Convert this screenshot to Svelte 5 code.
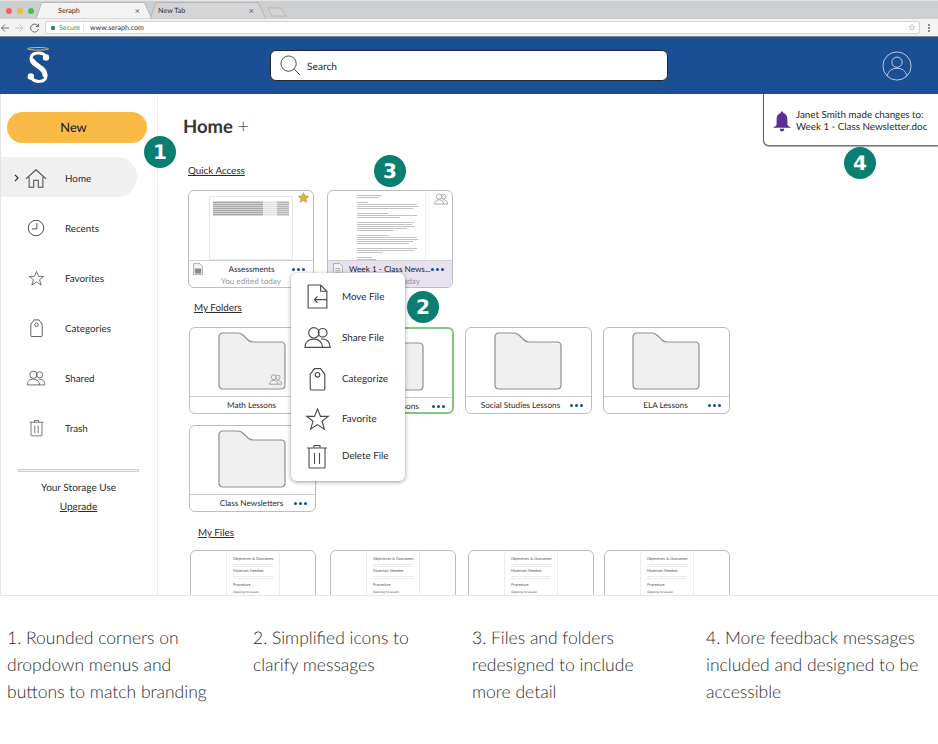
<script>
  const navItems = [
    { label: 'Home', icon: 'home', active: true },
    { label: 'Recents', icon: 'clock' },
    { label: 'Favorites', icon: 'star' },
    { label: 'Categories', icon: 'tag' },
    { label: 'Shared', icon: 'people' },
    { label: 'Trash', icon: 'trash' }
  ];

  const menuItems = [
    { label: 'Move File', icon: 'move' },
    { label: 'Share File', icon: 'people' },
    { label: 'Categorize', icon: 'tag' },
    { label: 'Favorite', icon: 'star' },
    { label: 'Delete File', icon: 'trash' }
  ];

  const folderRows = [
    [
      { name: 'Math Lessons', shared: true },
      { name: 'Science Lessons', selected: true },
      { name: 'Social Studies Lessons', long: true },
      { name: 'ELA Lessons' }
    ],
    [{ name: 'Class Newsletters' }]
  ];

  const captions = [
    '1. Rounded corners on dropdown menus and buttons to match branding',
    '2. Simplified icons to clarify messages',
    '3. Files and folders redesigned to include more detail',
    '4. More feedback messages included and designed to be accessible'
  ];

  const badges = [
    { n: 1, cls: 'b1' },
    { n: 2, cls: 'b2' },
    { n: 3, cls: 'b3' },
    { n: 4, cls: 'b4' }
  ];

  // line widths (%) for the tiny letter preview, 0 means a blank gap
  const letterLines = [40, 36, 0, 18, 96, 98, 90, 0, 50, 96, 70, 0, 92, 88, 94, 80, 60, 0, 52, 96, 98, 90, 84, 0, 96, 92, 40, 0, 24, 30, 20];
</script>

{#snippet icon(name)}
  {#if name === 'home'}
    <svg viewBox="0 0 24 22" class="ic"><path d="M1 11.500 12 1.500l11 10M4.500 9v11.500h5V13h5v7.500h5V9" /></svg>
  {:else if name === 'clock'}
    <svg viewBox="0 0 20 20" class="ic"><circle cx="10" cy="10" r="8.600" /><path d="M11 4.500V11H5.500" /></svg>
  {:else if name === 'star'}
    <svg viewBox="0 0 24 24" class="ic"><path d="M12 2l2.900 7h7.400l-6 4.700 2.300 7.600L12 16.900l-6.600 4.400 2.300-7.600-6-4.700h7.400z" /></svg>
  {:else if name === 'tag'}
    <svg viewBox="0 0 16 23" class="ic"><path d="M1 7 5 1.500h6L15 7v14a1 1 0 0 1-1 1H2a1 1 0 0 1-1-1z" /><circle cx="8" cy="7.500" r="2.200" /></svg>
  {:else if name === 'people'}
    <svg viewBox="0 0 26 22" class="ic"><circle cx="9.500" cy="6.500" r="5" /><circle cx="18" cy="6.500" r="4.200" /><path d="M1 20.500c0-5 3.500-8 8.500-8s8 3 8.500 8zM16.500 12.600c5-1 8.500 2.500 8.700 7.900h-7.200" /></svg>
  {:else if name === 'trash'}
    <svg viewBox="0 0 22 25" class="ic"><path d="M1 4h20M8 4V1.500h6V4M3 4v19a1 1 0 0 0 1 1h14a1 1 0 0 0 1-1V4M8.500 9v11M13.500 9v11" /></svg>
  {:else if name === 'move'}
    <svg viewBox="0 0 20 24" class="ic"><path d="M1 1h12l6 6v16H1zM13 1v6h6M19 15H7M10 12l-3 3 3 3" /></svg>
  {/if}
{/snippet}

{#snippet dots()}
  <span class="dots"><i></i><i></i><i></i></span>
{/snippet}

{#snippet folderCard(folder)}
  <div class="card folder-card" class:selected={folder.selected}>
    <div class="folder-thumb">
      <div class="folder-shape">
        <svg viewBox="0 0 68 58" preserveAspectRatio="none">
          <path d="M5 1h15c3 0 4 1 6 3l4 4c1.500 1.500 3 2 5 2h28c2.500 0 4 1.500 4 4v39c0 2.500-1.500 4-4 4H5c-2.500 0-4-1.500-4-4V5c0-2.500 1.500-4 4-4z" />
        </svg>
        {#if folder.shared}
          <span class="folder-share">{@render icon('people')}</span>
        {/if}
      </div>
    </div>
    <div class="card-foot folder-foot" class:long={folder.long}>
      <span class="card-name">{folder.name}</span>
      {@render dots()}
    </div>
  </div>
{/snippet}

<div class="page">
  <div class="tabstrip">
    <div class="lights"><i class="red"></i><i class="amber"></i><i class="green"></i></div>
    <div class="tab active">
      <svg viewBox="0 0 120 19" preserveAspectRatio="none"><path d="M0 19 6 .5h106l8 18.500z" /></svg>
      <span>Seraph</span><b>×</b>
    </div>
    <div class="tab">
      <svg viewBox="0 0 120 19" preserveAspectRatio="none"><path d="M0 19 6 .5h106l8 18.500z" /></svg>
      <span>New Tab</span><b>×</b>
    </div>
    <svg class="newtab" viewBox="0 0 20 10"><path d="M1 1h13l5 8H5z" /></svg>
  </div>

  <div class="toolbar">
    <svg class="nav-arrows" viewBox="0 0 40 10">
      <path class="on" d="M9 5H1.500M5 1.500 1.500 5 5 8.500" />
      <path class="off" d="M15.500 5H23M19.500 1.500 23 5l-3.500 3.500" />
      <path class="on" d="M38 3a4 4 0 1 0 .5 3M38.500 .8V3.500h-2.700" />
    </svg>
    <div class="urlbar">
      <span class="secure"><i></i>Secure</span>
      <span class="url">www.seraph.com</span>
      <span class="url-star">☆</span>
    </div>
    <span class="kebab"><i></i><i></i><i></i></span>
  </div>

  <header class="topbar">
    <svg class="logo" viewBox="0 0 24 37" role="img" aria-label="Seraph">
      <ellipse class="halo" cx="12" cy="1.800" rx="10.500" ry="1.300" />
      <path class="swash" d="M20 10C18 5 6 4 5 11c-1 7 15 10 15 18 0 7-12 7-15 1" />
      <path class="swash thick" d="M6.500 14c3 5 12.500 7 12.500 14" />
      <circle cx="20" cy="10.500" r="3.200" />
      <circle cx="4.800" cy="29.500" r="3.200" />
    </svg>
    <div class="search">
      <svg viewBox="0 0 22 22"><circle cx="9" cy="9" r="8" /><path d="m14.800 14.800 6.200 6.200" /></svg>
      <span>Search</span>
    </div>
    <svg class="avatar" viewBox="0 0 32 32">
      <circle cx="16" cy="16" r="15" />
      <circle cx="16" cy="12" r="5.500" />
      <path d="M5.500 26.500c1.500-5.500 5-8 10.500-8s9 2.500 10.500 8" />
    </svg>
  </header>

  <main class="main">
    <aside class="sidebar">
      <button class="new-btn">New</button>
      <nav class="nav">
        {#each navItems as item}
          <div class="nav-item" class:active={item.active}>
            {#if item.active}
              <svg class="chevron" viewBox="0 0 5 8"><path d="M1 .8 4 4 1 7.200" /></svg>
            {/if}
            <span class="nav-icon {item.icon}">{@render icon(item.icon)}</span>
            <span>{item.label}</span>
          </div>
        {/each}
      </nav>
      <div class="storage">
        <div class="storage-bar"></div>
        <div>Your Storage Use</div>
        <a href="#upgrade">Upgrade</a>
      </div>
    </aside>

    <section class="content">
      <h1>Home <span>+</span></h1>

      <h2 class="quick-title">Quick Access</h2>
      <div class="row quick-row">
        <div class="card file-card">
          <div class="file-thumb">
            <div class="sheet"><div class="sheet-grid"></div></div>
            <svg class="fav" viewBox="0 0 24 24"><path d="M12 1.500l3.200 7.300 7.800.7-5.900 5.200 1.800 7.800-6.900-4.100-6.900 4.100 1.800-7.800L1 9.500l7.800-.7z" /></svg>
          </div>
          <div class="card-foot file-foot">
            <span class="doc-icon">
              <svg viewBox="0 0 11 13"><path d="M.5.500h7l3 3v9H.5z" /><path class="fill" d="M2 6h7v5.500H2z" /></svg>
            </span>
            <span class="card-name">Assessments</span>
            {@render dots()}
            <span class="edited">You edited today</span>
          </div>
        </div>

        <div class="card file-card">
          <div class="file-thumb">
            <div class="letter">
              {#each letterLines as w}
                <i style="width: {w}%" class:gap={w === 0}></i>
              {/each}
            </div>
            <span class="thumb-share">{@render icon('people')}</span>
          </div>
          <div class="card-foot file-foot recent">
            <span class="doc-icon">
              <svg viewBox="0 0 11 13"><path d="M.5.500h7l3 3v9H.5zM2.500 6h6M2.500 8h6M2.500 10h6" /></svg>
            </span>
            <span class="card-name strong">Week 1 - Class News...</span>
            {@render dots()}
            <span class="edited">You edited today</span>
          </div>
        </div>
      </div>

      <h2 class="folder-title">My Folders</h2>
      {#each folderRows as row}
        <div class="row folder-row">
          {#each row as folder}
            {@render folderCard(folder)}
          {/each}
        </div>
      {/each}

      <h2 class="files-title">My Files</h2>
      <div class="row files-row">
        {#each [1, 2, 3, 4] as _}
          <div class="card lesson-card">
            <div class="lesson-page">
              <b>Objectives &amp; Outcomes</b>
              <i></i><i></i>
              <b>Materials Needed</b>
              <i></i><i></i>
              <b class="wide">Procedure</b>
              <em>Opening to Lesson</em>
              <i></i><i></i>
            </div>
          </div>
        {/each}
      </div>
    </section>

    <div class="menu">
      {#each menuItems as item}
        <div class="menu-item">
          <span class="menu-icon {item.icon}">{@render icon(item.icon)}</span>
          <span>{item.label}</span>
        </div>
      {/each}
    </div>

    <div class="toast">
      <svg viewBox="0 0 20 22"><path d="M10 0c1 0 1.500.7 1.500 1.700C15 2.500 16 5.500 16 9v5c0 1.500 2 2.500 3.500 3.500v.5H.5v-.5C2 16.500 4 15.500 4 14V9c0-3.500 1-6.500 4.500-7.300C8.500.7 9 0 10 0zM7.500 19h5c0 2-1 3-2.500 3s-2.500-1-2.500-3z" /></svg>
      <p>Janet Smith made changes to:<br />Week 1 - Class Newsletter.doc</p>
    </div>
  </main>

  <footer class="captions">
    {#each captions as caption}
      <p>{caption}</p>
    {/each}
  </footer>

  {#each badges as badge}
    <span class="badge {badge.cls}">{badge.n}</span>
  {/each}
</div>

<style>
  :global(body) {
    margin: 0;
    background: #fff;
  }

  .page {
    position: relative;
    width: 938px;
    height: 744px;
    overflow: hidden;
    font-family: Lato, "Liberation Sans", sans-serif;
    color: #2b2b2b;
    text-rendering: geometricPrecision;
  }

  /* browser chrome */
  .tabstrip {
    display: flex;
    align-items: flex-end;
    height: 19px;
    padding-top: 1px;
    background: #cecfd0;
    border-top: 1px solid #e3e3e3;
    box-sizing: border-box;
  }

  .lights {
    display: flex;
    gap: 5px;
    width: 36px;
    padding: 0 0 5px 6px;
    box-sizing: border-box;
  }

  .lights i {
    width: 6px;
    height: 6px;
    border-radius: 50%;
  }

  .red { background: #f4605a; }
  .amber { background: #f6b73c; }
  .green { background: #3ec24d; }

  .tab {
    position: relative;
    display: flex;
    align-items: center;
    justify-content: space-between;
    width: 116px;
    height: 17px;
    margin-right: -2px;
    padding: 0 12px 0 22px;
    box-sizing: border-box;
    font-size: 7.200px;
    color: #333;
  }

  .tab svg {
    position: absolute;
    inset: 0;
    width: 100%;
    height: 100%;
  }

  .tab path {
    fill: #d4d5d6;
    stroke: #aeaeae;
    stroke-width: 0.8;
    vector-effect: non-scaling-stroke;
  }

  .tab.active path {
    fill: #f3f3f3;
  }

  .tab span,
  .tab b {
    position: relative;
  }

  .tab b {
    font-size: 9px;
    font-weight: 400;
    color: #666;
  }

  .tab + .tab {
    width: 116px;
    padding-left: 8px;
  }

  .newtab {
    width: 20px;
    height: 10px;
    margin: 0 0 2px 3px;
  }

  .newtab path {
    fill: #d4d5d6;
    stroke: #a4a4a4;
    stroke-width: 0.6;
  }

  .toolbar {
    display: flex;
    align-items: center;
    height: 18px;
    background: #f3f3f3;
    border-bottom: 1px solid #7c8794;
    box-sizing: border-box;
  }

  .nav-arrows {
    width: 40px;
    height: 10px;
    margin: 0 5px 0 0;
    fill: none;
    stroke-width: 1;
  }

  .nav-arrows .on { stroke: #6d6d6d; }
  .nav-arrows .off { stroke: #c6c6c6; }

  .urlbar {
    display: flex;
    align-items: center;
    width: 875px;
    height: 13px;
    background: #fff;
    border: 1px solid #d2d2d2;
    border-radius: 2px;
    box-sizing: border-box;
    font-size: 7.100px;
  }

  .secure {
    display: flex;
    align-items: center;
    gap: 4px;
    width: 38px;
    padding-left: 5px;
    color: #3a9a5c;
    border-right: 1px solid #e6e6e6;
    box-sizing: border-box;
  }

  .secure i {
    width: 4px;
    height: 4px;
    background: #2f8f4e;
    border-radius: 1px;
  }

  .url {
    margin-left: 6px;
    color: #333;
  }

  .url-star {
    margin-left: auto;
    padding-right: 3px;
    font-family: "DejaVu Sans", sans-serif;
    font-size: 9px;
    color: #666;
  }

  .kebab {
    display: flex;
    flex-direction: column;
    gap: 1px;
    margin-left: 8px;
  }

  .kebab i {
    width: 2px;
    height: 2px;
    background: #666;
    border-radius: 50%;
  }

  /* app header */
  .topbar {
    display: flex;
    align-items: center;
    height: 57px;
    padding: 0 26px 0 26px;
    background: #1c4e94;
    box-sizing: border-box;
  }

  .logo {
    flex: none;
    width: 24px;
    height: 37px;
    fill: #fff;
  }

  .logo .halo {
    fill: none;
    stroke: #e8b23f;
    stroke-width: 1;
  }

  .logo .swash {
    fill: none;
    stroke: #fff;
    stroke-width: 3;
    stroke-linecap: round;
  }

  .logo .swash.thick {
    stroke-width: 5;
  }

  .search {
    display: flex;
    align-items: center;
    gap: 6px;
    width: 398px;
    height: 31px;
    margin: 0 auto 0 220px;
    padding-left: 9px;
    background: #fff;
    border: 1.500px solid #1f2a3a;
    border-radius: 6px;
    box-sizing: border-box;
    font-size: 10.200px;
  }

  .search span {
    position: relative;
    top: 1px;
  }

  .search svg {
    width: 21px;
    height: 21px;
    fill: none;
    stroke: #444;
    stroke-width: 1;
  }

  .avatar {
    width: 30px;
    height: 30px;
    fill: none;
    stroke: #c3d0e2;
    stroke-width: 1;
  }

  /* main area */
  .main {
    position: relative;
    display: flex;
    height: 502px;
    overflow: hidden;
    border-left: 1px solid #e6e6e6;
    border-bottom: 1px solid #e6e6e6;
    box-sizing: border-box;
  }

  .sidebar {
    flex: none;
    width: 157px;
    border-right: 1px solid #eeeeee;
    box-sizing: border-box;
    font-size: 9.800px;
  }

  .new-btn {
    display: block;
    width: 140px;
    height: 31px;
    margin: 18px 0 0 6px;
    padding: 0 7px 1px 0;
    background: #f9bb45;
    border: 0;
    border-radius: 16px;
    font-family: inherit;
    font-size: 12.800px;
    font-weight: 500;
    color: #222;
    text-rendering: geometricPrecision;
  }

  .nav {
    margin-top: 14px;
  }

  .nav-item {
    position: relative;
    display: flex;
    align-items: center;
    width: 136px;
    height: 40px;
    margin-bottom: 10px;
    padding: 4px 0 0 64px;
    box-sizing: border-box;
    border-radius: 0 20px 20px 0;
  }

  .nav-item.active {
    background: #f0f0f0;
  }

  .chevron {
    position: absolute;
    left: 13px;
    top: 17px;
    width: 5px;
    height: 8px;
    fill: none;
    stroke: #333;
    stroke-width: 1.200;
  }

  .nav-icon {
    position: absolute;
    display: flex;
    align-items: center;
    justify-content: center;
    left: 24px;
    top: 0;
    width: 22px;
    height: 42px;
  }

  .ic {
    display: block;
    width: 100%;
    height: 100%;
    fill: none;
    stroke: #4c4c4c;
    stroke-width: 1.100;
  }

  .nav-icon.home :global(svg) { width: 23px; height: 21px; }
  .nav-icon.clock :global(svg) { width: 18px; height: 18px; }
  .nav-icon.star :global(svg) { width: 17px; height: 17px; }
  .nav-icon.tag :global(svg) { width: 13px; height: 20px; }
  .nav-icon.people :global(svg) { width: 20px; height: 16px; }
  .nav-icon.trash :global(svg) { width: 15px; height: 18px; }

  .storage {
    margin: 22px 0 0 17px;
    width: 121px;
    text-align: center;
    font-size: 10px;
    line-height: 19px;
  }

  .storage-bar {
    height: 3px;
    margin-bottom: 7px;
    background: #f1f1f1;
    border: 1px solid #cfcfcf;
    box-sizing: border-box;
  }

  .storage a {
    color: #2b2b2b;
  }

  /* content */
  .content {
    flex: 1;
    padding: 20px 0 0 25px;
  }

  h1 {
    margin: 0 0 25px;
    font-size: 18.500px;
    font-weight: 700;
    line-height: 24px;
    color: #333;
  }

  h1 span {
    font-size: 20px;
    font-weight: 300;
    color: #555;
  }

  h2 {
    margin: 0 0 11px;
    font-size: 9.800px;
    font-weight: 400;
    line-height: 16px;
    text-decoration: underline;
  }

  .quick-title { margin-left: 5px; }
  .folder-title { margin: 12px 0 11px 11px; }
  .files-title { margin: 13px 0 9px 15px; }

  .row {
    display: flex;
  }

  .quick-row {
    gap: 13px;
    margin-left: 5px;
  }

  .folder-row {
    gap: 11px;
    margin: 0 0 11px 6px;
  }

  .files-row {
    gap: 12px;
    margin-left: 7px;
  }

  .files-row .card:nth-child(2),
  .files-row .card:nth-child(3) {
    position: relative;
    left: 2px;
  }

  .card {
    flex: none;
    background: #fff;
    border: 1px solid #bdbdbd;
    border-radius: 6px;
    box-sizing: border-box;
    overflow: hidden;
  }

  .card-foot {
    position: relative;
    display: flex;
    align-items: center;
    border-top: 1px solid #cfcfcf;
    box-sizing: border-box;
    font-size: 8.200px;
  }

  .card-name {
    flex: 1;
    min-width: 0;
    text-align: center;
    white-space: nowrap;
  }

  .dots {
    display: flex;
    flex: none;
    gap: 2px;
  }

  .dots i {
    width: 3px;
    height: 3px;
    background: #1c4e94;
    border-radius: 50%;
  }

  /* quick access */
  .file-card {
    width: 126px;
    height: 98px;
  }

  .file-thumb {
    position: relative;
    height: 69px;
  }

  .sheet {
    position: absolute;
    top: 5px;
    left: 20px;
    width: 84px;
    height: 64px;
    border: 1px solid #e6e6e6;
    box-sizing: border-box;
    padding: 4px 3px;
  }

  .sheet-grid {
    height: 15px;
    background:
      repeating-linear-gradient(0deg, rgba(255, 255, 255, 0.5) 0 1px, transparent 1px 2px),
      linear-gradient(90deg, #a8a8a8 0 66%, #e2e2e2 66% 84%, #b4b4b4 84% 100%);
  }

  .fav {
    position: absolute;
    top: 1px;
    right: 4px;
    width: 11px;
    height: 11px;
  }

  .fav path {
    fill: #f2b134;
    stroke: #8a6a20;
    stroke-width: 1;
  }

  .letter {
    position: absolute;
    top: 0;
    left: 27px;
    width: 71px;
    height: 69px;
    padding: 4px 6px 0 2px;
    border-right: 1px solid #efefef;
    box-sizing: border-box;
  }

  .letter i {
    display: block;
    height: 1px;
    margin-bottom: 1px;
    background: #c2c2c2;
  }

  .letter i.gap {
    height: 2px;
    background: none;
  }

  .thumb-share {
    position: absolute;
    top: 2px;
    right: 4px;
    width: 14px;
    height: 12px;
  }

  .thumb-share :global(path),
  .thumb-share :global(circle),
  .folder-share :global(path),
  .folder-share :global(circle) {
    stroke: #777;
  }

  .file-foot {
    height: 27px;
    padding: 0 8px 10px 4px;
  }

  .file-foot.recent {
    background: #e7e1f0;
    padding-left: 5px;
  }

  .file-foot .card-name {
    padding-left: 8px;
  }

  .file-foot .card-name.strong {
    padding-left: 6px;
    text-align: left;
    color: #222;
  }

  .doc-icon {
    flex: none;
    width: 10px;
    height: 12px;
  }

  .doc-icon svg {
    display: block;
    width: 100%;
    height: 100%;
    fill: #f2f2f2;
    stroke: #8a8a8a;
    stroke-width: 0.7;
  }

  .doc-icon .fill {
    fill: #8a8a8a;
    stroke: none;
  }

  .edited {
    position: absolute;
    left: 0;
    right: 0;
    bottom: 1px;
    text-align: center;
    font-size: 8.100px;
    color: #9b9b9b;
  }

  /* folders */
  .folder-card {
    width: 127px;
    height: 87px;
  }

  .folder-card.selected {
    border: 2px solid #7cc97f;
  }

  .folder-thumb {
    display: flex;
    justify-content: center;
    height: 68px;
    padding: 4px 2px 0 0;
    box-sizing: border-box;
  }

  .folder-shape {
    position: relative;
    width: 68px;
    height: 58px;
  }

  .folder-shape svg {
    display: block;
    width: 100%;
    height: 100%;
    fill: #f0f0f0;
    stroke: #8f8f8f;
    stroke-width: 1.200;
  }

  .folder-share {
    position: absolute;
    right: 4px;
    bottom: 5px;
    width: 13px;
    height: 11px;
  }

  .folder-foot {
    height: 17px;
    padding: 0 8px 0 26px;
  }

  .selected .folder-foot {
    padding-right: 7px;
  }

  .folder-foot.long {
    padding-left: 12px;
  }

  .folder-foot .dots {
    margin-left: 7px;
  }

  /* my files */
  .lesson-card {
    width: 126px;
    height: 90px;
  }

  .lesson-page {
    width: 54px;
    height: 90px;
    margin-left: 35px;
    padding: 5px 6px;
    border: solid #ececec;
    border-width: 0 1px;
    box-sizing: border-box;
    color: #555;
  }

  .lesson-page b {
    display: block;
    margin-bottom: 2px;
    font-size: 3.900px;
    font-weight: 400;
    line-height: 6px;
    white-space: nowrap;
  }

  .lesson-page b.wide {
    margin-top: 3px;
  }

  .lesson-page em {
    display: block;
    font-size: 3.200px;
    font-style: normal;
    line-height: 5px;
  }

  .lesson-page i {
    display: block;
    width: 100%;
    height: 1px;
    margin-bottom: 1px;
    background: #ebebeb;
  }

  /* overlays */
  .menu {
    position: absolute;
    top: 179px;
    left: 290px;
    width: 114px;
    padding: 3px 0 8px;
    background: #fff;
    border-radius: 6px;
    box-shadow: 0 1px 4px rgba(0, 0, 0, 0.4);
    font-size: 9.800px;
    box-sizing: border-box;
  }

  .menu-item {
    display: flex;
    align-items: center;
    height: 41px;
    padding-left: 51px;
    position: relative;
  }

  .menu-item:nth-child(4) { height: 40px; }
  .menu-item:nth-child(5) { height: 34px; }

  .menu-icon {
    position: absolute;
    left: 12px;
    top: 0;
    display: flex;
    align-items: center;
    justify-content: center;
    width: 28px;
    height: 100%;
  }

  .menu-icon.move :global(svg) { width: 21px; height: 25px; }
  .menu-icon.people :global(svg) { width: 27px; height: 23px; }
  .menu-icon.tag :global(svg) { width: 17px; height: 24px; }
  .menu-icon.star :global(svg) { width: 25px; height: 25px; }
  .menu-icon.trash :global(svg) { width: 22px; height: 25px; }

  .toast {
    position: absolute;
    top: 0;
    right: 0;
    display: flex;
    align-items: center;
    gap: 5px;
    width: 175px;
    height: 52px;
    padding: 3px 0 0 9px;
    background: #fff;
    border: 1px solid #5e5e5e;
    border-width: 0 0 1px 1px;
    border-bottom-color: #777;
    border-radius: 0 0 0 6px;
    box-shadow: 0 1px 1px rgba(0, 0, 0, 0.35);
    box-sizing: border-box;
  }

  .toast svg {
    flex: none;
    width: 18px;
    height: 21px;
    fill: #5b2e96;
  }

  .toast p {
    margin: 0;
    font-size: 9.800px;
    line-height: 12.500px;
    white-space: nowrap;
  }

  .captions {
    display: grid;
    grid-template-columns: 246px 219px 234px 1fr;
    padding: 28px 0 0 7px;
    font-size: 17.500px;
    font-weight: 300;
    line-height: 27px;
    color: #2b2b2b;
  }

  .captions p {
    margin: 0;
    max-width: 220px;
  }

  .captions p:nth-child(2) { max-width: 170px; }
  .captions p:nth-child(3) { max-width: 190px; }

  .badge {
    position: absolute;
    width: 32px;
    height: 32px;
    background: #0a7e70;
    border-radius: 50%;
    color: #fff;
    font-family: "DejaVu Sans", sans-serif;
    font-size: 20px;
    font-weight: 700;
    line-height: 32px;
    text-align: center;
  }

  .b1 { left: 144px; top: 136px; }
  .b2 { left: 407px; top: 291px; }
  .b3 { left: 374px; top: 155px; }
  .b4 { left: 844px; top: 147px; }
</style>
